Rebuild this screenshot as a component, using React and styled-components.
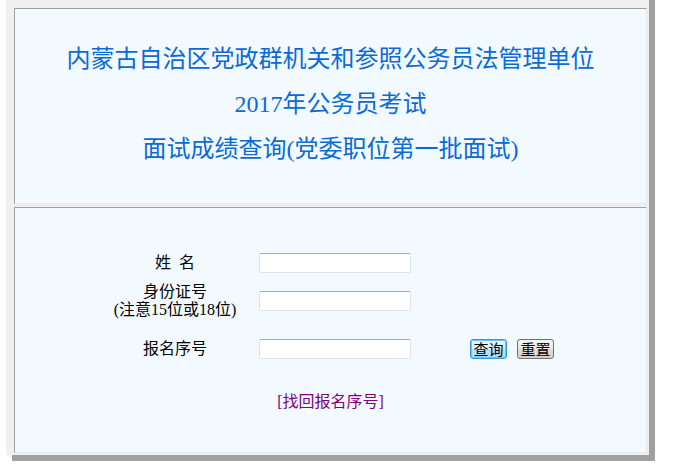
import React from 'react'
import styled, { createGlobalStyle } from 'styled-components';

const GlobalStyle = createGlobalStyle`
  body {
    margin: 0;
    background: #ffffff;
    font-family: "Liberation Serif", "Noto Sans CJK SC", serif;
  }
`;

const Wrapper = styled.div`
    padding: 0 0 12px 6px;
`;

const Frame = styled.div`
    width: 643px;
    box-sizing: border-box;
    background: #f0f0f0;
    padding: 8px 2px 2px 8px;
    display: flex;
    flex-direction: column;
    gap: 3px;
    box-shadow: 6px 0 0 #a0a0a0, 6px 6px 0 #a0a0a0;
`;

const Cell = styled.div`
    box-sizing: border-box;
    height: ${p => p.$height}px;
    background: #f2faff;
    border: 1px solid #e4e8ea;
    border-top-color: #a0a0a0;
    border-left-color: #a0a0a0;
`;

const TitleCell = styled(Cell)`
    padding-top: 28px;
    display: flex;
    flex-direction: column;
    align-items: center;
`;

const TitleLine = styled.div`
    font-size: 24px;
    line-height: 45px;
    color: #0a6ad8;
`;

const FormCell = styled(Cell)`
    padding: 45px 0 0 85px;
`;

const Row = styled.div`
    display: grid;
    grid-template-columns: 150px 152px 1fr;
    column-gap: 9px;
    align-items: center;
    margin-top: ${p => p.$gap || 0}px;
`;

const Label = styled.div`
    text-align: center;
    font-size: 16px;
    line-height: 18px;
    color: #000;
    white-space: pre;
`;

const Input = styled.input`
    box-sizing: border-box;
    width: 152px;
    height: 20px;
    margin: 0;
    background: #fff;
    border: 1px solid #dde4ea;
    border-top-color: #a8a8a8;
    border-radius: 2px;
    outline: none;
`;

const Buttons = styled.div`
    display: flex;
    gap: 10px;
    padding-left: 50px;
`;

const Button = styled.button`
    box-sizing: border-box;
    width: 37px;
    height: 20px;
    padding: 0;
    margin: 0;
    font-family: "Noto Sans CJK SC", sans-serif;
    font-size: 15px;
    line-height: 16px;
    color: #000;
    border: 1px solid ${p => (p.$focus ? '#3a98d8' : '#707070')};
    border-radius: 3px;
    background: ${p => (p.$focus
        ? 'linear-gradient(#eaf6fd, #d9f0fc 50%, #bee6fd 50%, #a7d9f5)'
        : 'linear-gradient(#f2f2f2, #ebebeb 50%, #dddddd 50%, #cfcfcf)')};
    box-shadow: ${p => (p.$focus ? '0 0 0 1px #6cc4f4 inset' : 'none')};
`;

const LinkRow = styled.div`
    margin-top: 33px;
    padding-right: 85px;
    text-align: center;
    font-size: 16px;
    line-height: 20px;
`;

const Link = styled.a`
    color: #800080;
    text-decoration: none;
`;

const App = () => {
  return (
  <Wrapper>
    <GlobalStyle/>
    <Frame>
      <TitleCell $height={196}>
        <TitleLine>内蒙古自治区党政群机关和参照公务员法管理单位</TitleLine>
        <TitleLine>2017年公务员考试</TitleLine>
        <TitleLine>面试成绩查询(党委职位第一批面试)</TitleLine>
      </TitleCell>
      <FormCell $height={246}>
        <Row>
          <Label>{'姓\u2002名'}</Label>
          <Input type="text" name="xm" />
        </Row>
        <Row $gap={10}>
          <Label>身份证号<br/>(注意15位或18位)</Label>
          <Input type="text" name="sfzh" />
        </Row>
        <Row $gap={20}>
          <Label>报名序号</Label>
          <Input type="text" name="bmxh" />
          <Buttons>
            <Button $focus>查询</Button>
            <Button>重置</Button>
          </Buttons>
        </Row>
        <LinkRow>
          <Link href="#">[找回报名序号]</Link>
        </LinkRow>
      </FormCell>
    </Frame>
  </Wrapper>
  )
}

export default App;
